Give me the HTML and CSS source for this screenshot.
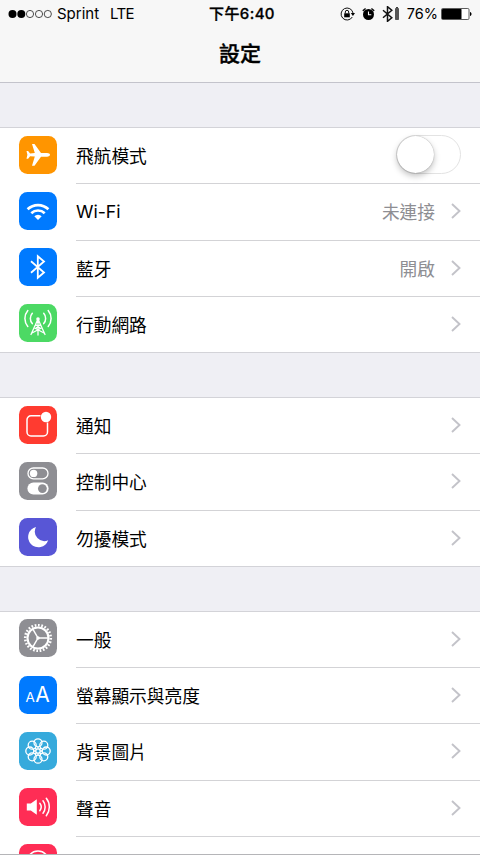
FILE: index.html
```html
<!DOCTYPE html>
<html lang="zh-Hant">
<head>
  <meta charset="UTF-8">
  <meta name="viewport" content="width=device-width, initial-scale=1.0">
  <title>設定</title>
  <link rel="stylesheet" href="styles.css">
</head>
<body>

  <header class="header">
    <div class="status-bar">
      <div class="carrier">
        <svg class="signal" viewBox="0 0 45 10">
          <circle cx="4.5" cy="5" r="4"/>
          <circle cx="13.3" cy="5" r="4"/>
          <g fill="none" stroke="#222" stroke-width=".8">
            <circle cx="22" cy="5" r="3.6"/>
            <circle cx="31" cy="5" r="3.6"/>
            <circle cx="39.8" cy="5" r="3.6"/>
          </g>
        </svg>
        <span class="operator">Sprint</span>
        <span class="network">LTE</span>
      </div>
      <div class="time">下午6:40</div>
      <div class="indicators">
        <svg class="lock" viewBox="0 0 16 14">
          <path d="M12.3 10A6 6 0 1 1 13 6" fill="none" stroke="#111" stroke-width="1"/>
          <path d="M10.8 6H15l-2.1 3z"/>
          <rect x="4.2" y="6.3" width="5.6" height="4"/>
          <path d="M5.3 6.5V5a1.7 1.7 0 0 1 3.4 0v1.5" fill="none" stroke="#111" stroke-width="1"/>
        </svg>
        <svg class="alarm" viewBox="0 0 13 14">
          <circle cx="6.5" cy="7.5" r="5.5"/>
          <path d="M.8 3.8 3.6 1.5M12.2 3.8 9.4 1.5" stroke="#111" stroke-width="1.5"/>
          <path d="M6.5 4.5v3.3h2.8" fill="none" stroke="#f7f7f7" stroke-width="1.1"/>
        </svg>
        <svg class="bt" viewBox="0 0 18 16">
          <path d="M1 4.2l8.800 7.600-4.300 3.500V.7l4.300 3.500L1 11.8" fill="none" stroke="#111" stroke-width="1.5"/>
          <rect x="13" y="2" width="4" height="12" rx=".8" fill="#555"/>
          <path d="M14 1.2h2V2h-2z"/>
        </svg>
        <span class="percent">76%</span>
        <svg class="battery" viewBox="0 0 32 12">
          <rect x=".5" y=".5" width="27.5" height="11" rx="1.2" fill="#fff" stroke="#333" stroke-width=".8"/>
          <rect x="1" y="1" width="19.5" height="10" rx=".6"/>
          <path d="M29 4c2 .3 2 3.7 0 4z"/>
        </svg>
      </div>
    </div>
    <h1>設定</h1>
  </header>

  <main>
    <section class="group">
      <div class="row">
        <svg class="icon orange" viewBox="0 0 38 38">
          <path fill="#fff" d="M31 18.8c0 1.100-1.200 1.900-3 1.900h-6L15.500 29.700h-2.500l2.800-9.100-4.700-.4-2 2.500H7.500l.9-3.900-.9-3.700h1.600l2 2.400 4.700-.4L13 8h2.500l6.500 9h6c1.800 0 3 .7 3 1.800z"/>
        </svg>
        <div class="cell">
          <span class="label">飛航模式</span>
          <span class="switch"></span>
        </div>
      </div>
      <div class="row">
        <svg class="icon blue" viewBox="0 0 38 38">
          <g fill="none" stroke="#fff" stroke-width="2.7">
            <path d="M8.6 17.3a15 15 0 0 1 20.8 0"/>
            <path d="M12.3 21.2a9.7 9.7 0 0 1 13.4 0"/>
          </g>
          <path fill="#fff" d="M15.3 24.2a5.3 5.3 0 0 1 7.4 0L19 28z"/>
        </svg>
        <div class="cell">
          <span class="label">Wi-Fi</span>
          <span class="value">未連接</span>
          <svg class="arrow" viewBox="0 0 10 16"><path d="M1 1l7.5 7L1 15"/></svg>
        </div>
      </div>
      <div class="row">
        <svg class="icon blue" viewBox="0 0 38 38">
          <path d="M12 13.3l13 11.2-6.2 5.3V8.2l6.2 5.3-13 11.2" fill="none" stroke="#fff" stroke-width="1.8"/>
        </svg>
        <div class="cell">
          <span class="label">藍牙</span>
          <span class="value">開啟</span>
          <svg class="arrow" viewBox="0 0 10 16"><path d="M1 1l7.5 7L1 15"/></svg>
        </div>
      </div>
      <div class="row">
        <svg class="icon green" viewBox="0 0 38 38">
          <g fill="none" stroke="#fff" stroke-width="1.5" stroke-linecap="round">
            <path d="M8.8 6.5a12.5 12.5 0 0 0 0 16M29.2 6.5a12.5 12.5 0 0 1 0 16"/>
            <path d="M13.3 9.3a7.8 7.8 0 0 0 0 10.3M24.7 9.3a7.8 7.8 0 0 1 0 10.3"/>
            <path d="M19 15l-7 15.5M19 15l7 15.5M19 15v16M16.500 20.500l5 4-8.500 4.500M21.500 20.500l-5 4 8.500 4.500" stroke-width="1.3"/>
          </g>
          <circle cx="19" cy="15" r="1.8" fill="#fff"/>
        </svg>
        <div class="cell">
          <span class="label">行動網路</span>
          <svg class="arrow" viewBox="0 0 10 16"><path d="M1 1l7.5 7L1 15"/></svg>
        </div>
      </div>
    </section>

    <section class="group">
      <div class="row">
        <svg class="icon red" viewBox="0 0 38 38">
          <path d="M21.5 9.8H12a4 4 0 0 0-4 4V26a4 4 0 0 0 4 4h12.5a4 4 0 0 0 4-4v-9.5" fill="none" stroke="#fff" stroke-width="1.5"/>
          <circle cx="27" cy="11" r="5.2" fill="#fff"/>
        </svg>
        <div class="cell">
          <span class="label">通知</span>
          <svg class="arrow" viewBox="0 0 10 16"><path d="M1 1l7.5 7L1 15"/></svg>
        </div>
      </div>
      <div class="row">
        <svg class="icon gray" viewBox="0 0 38 38">
          <rect x="9" y="6" width="20" height="10.8" rx="5.4" fill="none" stroke="#fff" stroke-width="1.3"/>
          <circle cx="14.6" cy="11.4" r="3.7" fill="#fff"/>
          <rect x="8.4" y="20.6" width="21.2" height="12" rx="6" fill="#fff"/>
          <circle cx="23.4" cy="26.6" r="4.4" fill="#8e8e93"/>
        </svg>
        <div class="cell">
          <span class="label">控制中心</span>
          <svg class="arrow" viewBox="0 0 10 16"><path d="M1 1l7.5 7L1 15"/></svg>
        </div>
      </div>
      <div class="row">
        <svg class="icon purple" viewBox="0 0 38 38">
          <path fill="#fff" d="M17 9a9.6 9.6 0 0 0 12.2 13.3A10.3 10.3 0 1 1 17 9z"/>
        </svg>
        <div class="cell">
          <span class="label">勿擾模式</span>
          <svg class="arrow" viewBox="0 0 10 16"><path d="M1 1l7.5 7L1 15"/></svg>
        </div>
      </div>
    </section>

    <section class="group">
      <div class="row">
        <svg class="icon gray" viewBox="0 0 38 38">
          <g fill="none" stroke="#fff">
            <!-- teeth: 24 around the rim -->
            <circle cx="19" cy="19" r="12.8" stroke-width="2.6" pathLength="48" stroke-dasharray="1 1"/>
            <circle cx="19" cy="19" r="10.5" stroke-width="2.1"/>
            <path d="M19 19h10M19 19l-5-8.7M19 19l-5 8.7" stroke-width="1.5"/>
          </g>
          <circle cx="19" cy="19" r="1.8" fill="#fff"/>
        </svg>
        <div class="cell">
          <span class="label">一般</span>
          <svg class="arrow" viewBox="0 0 10 16"><path d="M1 1l7.5 7L1 15"/></svg>
        </div>
      </div>
      <div class="row">
        <svg class="icon blue" viewBox="0 0 38 38">
          <text class="letter small" x="6.5" y="25.7">A</text>
          <text class="letter" x="16.3" y="25.7">A</text>
        </svg>
        <div class="cell">
          <span class="label">螢幕顯示與亮度</span>
          <svg class="arrow" viewBox="0 0 10 16"><path d="M1 1l7.5 7L1 15"/></svg>
        </div>
      </div>
      <div class="row">
        <svg class="icon cyan" viewBox="0 0 38 38">
          <g fill="none" stroke="#fff" stroke-width="1.3">
            <circle cx="19" cy="10.8" r="4"/>
            <circle cx="24.8" cy="13.2" r="4"/>
            <circle cx="27.2" cy="19" r="4"/>
            <circle cx="24.8" cy="24.8" r="4"/>
            <circle cx="19" cy="27.2" r="4"/>
            <circle cx="13.2" cy="24.8" r="4"/>
            <circle cx="10.8" cy="19" r="4"/>
            <circle cx="13.2" cy="13.2" r="4"/>
            <circle cx="19" cy="19" r="2.2"/>
            <path d="M19 14.5v2.3M19 21.2v2.3M14.5 19h2.3M21.2 19h2.3M15.8 15.8l1.7 1.7M20.5 20.5l1.7 1.7M22.2 15.8l-1.7 1.7M17.5 20.5l-1.7 1.7"/>
          </g>
        </svg>
        <div class="cell">
          <span class="label">背景圖片</span>
          <svg class="arrow" viewBox="0 0 10 16"><path d="M1 1l7.5 7L1 15"/></svg>
        </div>
      </div>
      <div class="row">
        <svg class="icon pink" viewBox="0 0 38 38">
          <path fill="#fff" d="M7.8 15.5h4l6-4.3v15.6l-6-4.3h-4z"/>
          <g fill="none" stroke="#fff" stroke-width="1.5" stroke-linecap="round">
            <path d="M20.8 15.3a6 6 0 0 1 0 7.4M24 12.8a10 10 0 0 1 0 12.4M27.3 10.3a14 14 0 0 1 0 17.4"/>
          </g>
        </svg>
        <div class="cell">
          <span class="label">聲音</span>
          <svg class="arrow" viewBox="0 0 10 16"><path d="M1 1l7.5 7L1 15"/></svg>
        </div>
      </div>
      <div class="row">
        <svg class="icon pink" viewBox="0 0 38 38">
          <circle cx="19" cy="18" r="11" fill="none" stroke="#fff" stroke-width="1.5"/>
        </svg>
        <div class="cell"></div>
      </div>
    </section>
  </main>

</body>
</html>
```
FILE: styles.css
```css
* {
  box-sizing: border-box;
}
body {
  margin: 0;
  height: 855px;
  overflow: hidden;
  background: #efeff4;
  color: #000;
  font-family: Inter, "Noto Sans CJK TC", sans-serif;
}
/* thin line along the bottom of the screen */
body::after {
  content: "";
  position: fixed;
  left: 0;
  right: 0;
  bottom: 0;
  height: 1px;
  background: #b5b5b8;
}
.header {
  height: 83px;
  background: #f7f7f7;
  border-bottom: 1px solid #c3c3cb;
}
.status-bar {
  display: grid;
  grid-template-columns: 1fr auto 1fr;
  align-items: center;
  height: 27px;
  padding: 0 7px 0 8px;
  font-size: 15px;
}
.carrier, .indicators {
  display: flex;
  align-items: center;
}
.signal {
  width: 45px;
  height: 10px;
}
.operator {
  margin-left: 4px;
}
.network {
  margin-left: 11px;
  letter-spacing: -0.6px;
}
.time {
  margin-left: 3px;
  font-weight: 500;
  font-size: 15px;
  letter-spacing: 0.4px;
  line-height: 24px;
  -webkit-text-stroke: 0.3px #000;
}
.indicators {
  justify-content: flex-end;
}
.lock {
  width: 16px;
  height: 14px;
}
.alarm {
  width: 13px;
  height: 14px;
  margin-left: 6px;
}
.bt {
  width: 18px;
  height: 16px;
  margin-left: 7px;
}
.percent {
  margin-left: 7px;
  font-size: 14.5px;
}
.battery {
  width: 32px;
  height: 12px;
  margin-left: 3px;
}
h1 {
  margin: 0;
  font-size: 21px;
  font-weight: 500;
  line-height: 54px;
  text-align: center;
  -webkit-text-stroke: 0.4px #000;
}
.group {
  margin-top: 44px;
  background: #fff;
  border-top: 1px solid #d3d3d8;
}
.row {
  display: flex;
  height: 56.25px;
  padding-left: 19px;
}
.icon {
  flex: none;
  width: 38px;
  height: 38px;
  margin: 7.7px 19px 0 0;
  border-radius: 8.5px;
}
.cell {
  flex: 1;
  display: flex;
  align-items: center;
  padding-right: 19px;
  border-bottom: 1px solid #d3d3d6;
}
.row:last-child {
  border-bottom: 1px solid #d3d3d8;
}
.row:last-child .cell {
  border-bottom: none;
}
.label {
  flex: 1;
  padding-bottom: 1px;
  font-size: 17.7px;
}
.value {
  margin-right: 16px;
  padding-bottom: 1px;
  color: #8e8e93;
  font-size: 17.7px;
}
.arrow {
  width: 10px;
  height: 16px;
  margin-bottom: 1px;
  fill: none;
  stroke: #c3c3c9;
  stroke-width: 1.9;
}
.switch {
  width: 65px;
  height: 39px;
  margin-bottom: 2px;
  border: 1.5px solid #e3e3e3;
  border-radius: 20px;
}
.switch::before {
  content: "";
  display: block;
  width: 37px;
  height: 37px;
  border-radius: 50%;
  background: #fff;
  box-shadow: 0 0 1px rgba(0, 0, 0, 0.4), 0 3px 6px rgba(0, 0, 0, 0.25);
}
.letter {
  fill: #fff;
  font-family: Inter, sans-serif;
  font-size: 21px;
}
.small {
  font-size: 13.5px;
}
.orange { background: #ff9500; }
.blue { background: #007aff; }
.green { background: #4cd964; }
.red { background: #ff3b30; }
.gray { background: #8e8e93; }
.purple { background: #5856d6; }
.cyan { background: #36aadc; }
.pink { background: #ff2d55; }
```
